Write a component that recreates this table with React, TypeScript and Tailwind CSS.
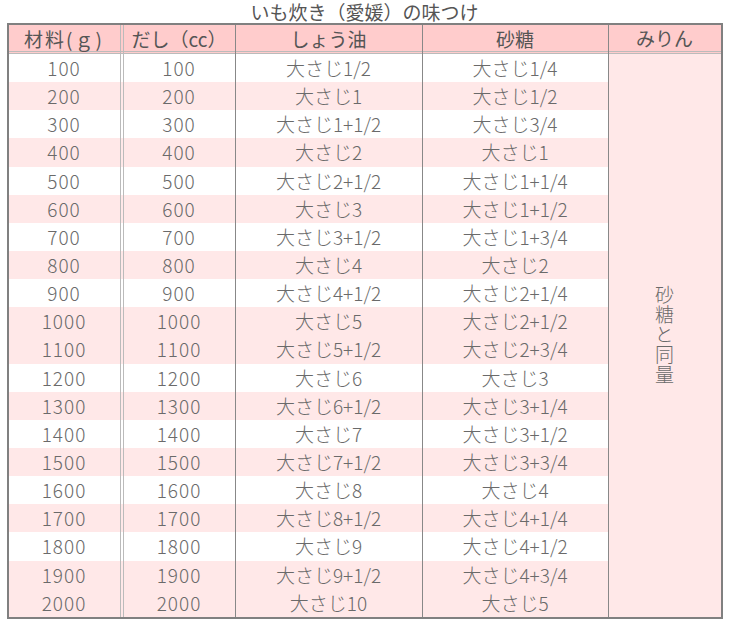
const soy = (n: number) => {
  const whole = Math.floor(n / 2);
  const half = n % 2 === 1;
  if (whole === 0) return "大さじ1/2";
  return half ? `大さじ${whole}+1/2` : `大さじ${whole}`;
};

const sugar = (n: number) => {
  const whole = Math.floor(n / 4);
  const rest = n % 4;
  const frac = ["", "1/4", "1/2", "3/4"][rest];
  if (whole === 0) return `大さじ${frac}`;
  return rest ? `大さじ${whole}+${frac}` : `大さじ${whole}`;
};

const pinkRows = [1, 3, 5, 7, 9, 10, 12, 14, 16, 18, 19];

const rows = Array.from({ length: 20 }, (_, i) => ({
  amount: String((i + 1) * 100),
  soy: soy(i + 1),
  sugar: sugar(i + 1),
  pink: pinkRows.includes(i),
}));

const cols = "grid grid-cols-[115px_112px_187px_186px]";

export default function App() {
  return (
    <div
      className="w-[729px] h-[625px] bg-white text-[#666]"
      style={{ fontFamily: '"Noto Sans CJK JP", "Noto Sans", sans-serif' }}
    >
      <div className="h-[23px] flex items-center justify-center text-[19px] leading-none text-[#555]">
        いも炊き（愛媛）の味つけ
      </div>

      <div className="mx-auto w-[716px] border-2 border-[#808080]">
        {/* header */}
        <div className="flex bg-[#ffcccc] border-b-[3px] border-double border-[#bbbbbb] text-[#555] text-[19px] h-[29px]">
          <div className={cols + " w-[600px]"}>
            <div className="flex items-center justify-center border-r-4 border-double border-[#bbbbbb] tracking-[2px]">材料(ｇ)</div>
            <div className="flex items-center justify-center border-r border-[#888]">だし（cc）</div>
            <div className="flex items-center justify-center border-r border-[#888]">しょう油</div>
            <div className="flex items-center justify-center border-r border-[#888]">砂糖</div>
          </div>
          <div className="flex-1 flex items-center justify-center">みりん</div>
        </div>

        {/* body */}
        <div className="flex text-[19px] font-light text-[#6a6a6a]">
          <div className="flex flex-col w-[600px]">
            {rows.map((r) => (
              <div
                key={r.amount}
                className={cols + " h-[28.15px] " + (r.pink ? "bg-[#ffe8e8]" : "bg-white")}
              >
                <div className="flex items-center justify-center border-r-4 border-double border-[#bbbbbb] tracking-[1px]">{r.amount}</div>
                <div className="flex items-center justify-center border-r border-[#888] tracking-[1px]">{r.amount}</div>
                <div className="flex items-center justify-center border-r border-[#888]">{r.soy}</div>
                <div className="flex items-center justify-center border-r border-[#888]">{r.sugar}</div>
              </div>
            ))}
          </div>
          <div className="flex-1 bg-[#ffe8e8] flex items-center justify-center">
            <span className="[writing-mode:vertical-rl] leading-none tracking-[1px]">砂糖と同量</span>
          </div>
        </div>
      </div>
    </div>
  );
}
